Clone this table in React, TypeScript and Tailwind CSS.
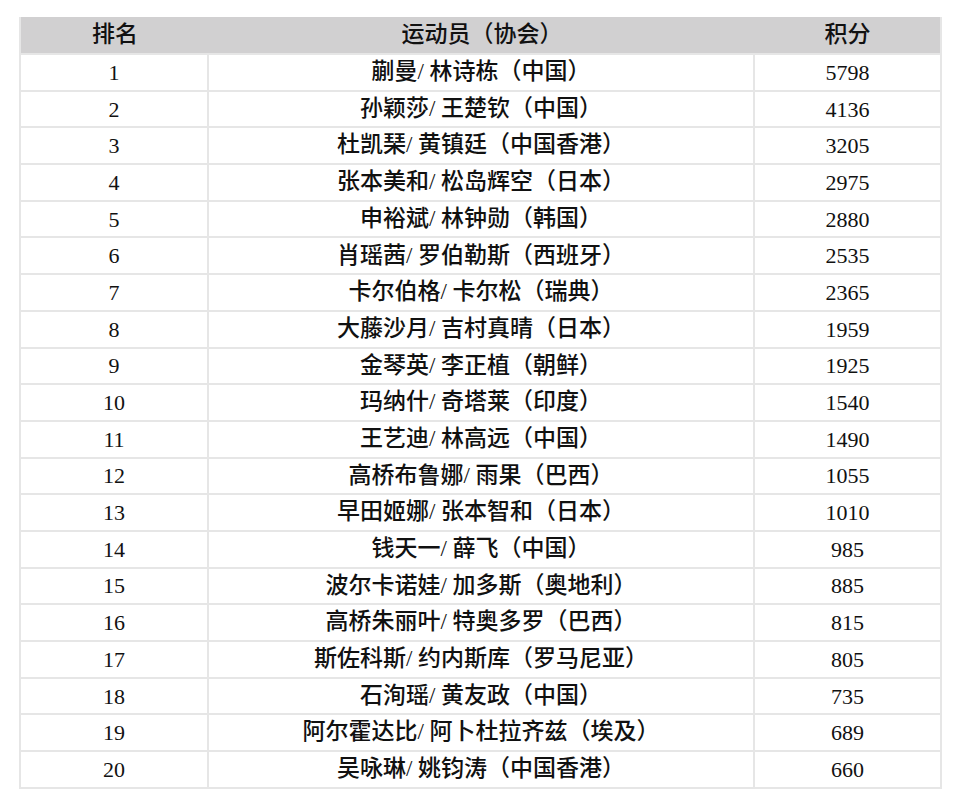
const rows: [number, string, number][] = [
  [1, '蒯曼/ 林诗栋（中国）', 5798],
  [2, '孙颖莎/ 王楚钦（中国）', 4136],
  [3, '杜凯琹/ 黄镇廷（中国香港）', 3205],
  [4, '张本美和/ 松岛辉空（日本）', 2975],
  [5, '申裕斌/ 林钟勋（韩国）', 2880],
  [6, '肖瑶茜/ 罗伯勒斯（西班牙）', 2535],
  [7, '卡尔伯格/ 卡尔松（瑞典）', 2365],
  [8, '大藤沙月/ 吉村真晴（日本）', 1959],
  [9, '金琴英/ 李正植（朝鲜）', 1925],
  [10, '玛纳什/ 奇塔莱（印度）', 1540],
  [11, '王艺迪/ 林高远（中国）', 1490],
  [12, '高桥布鲁娜/ 雨果（巴西）', 1055],
  [13, '早田姬娜/ 张本智和（日本）', 1010],
  [14, '钱天一/ 薛飞（中国）', 985],
  [15, '波尔卡诺娃/ 加多斯（奥地利）', 885],
  [16, '高桥朱丽叶/ 特奥多罗（巴西）', 815],
  [17, '斯佐科斯/ 约内斯库（罗马尼亚）', 805],
  [18, '石洵瑶/ 黄友政（中国）', 735],
  [19, '阿尔霍达比/ 阿卜杜拉齐兹（埃及）', 689],
  [20, '吴咏琳/ 姚钧涛（中国香港）', 660],
];

export default function App() {
  return (
    <div
      className="w-[960px] h-[806px] bg-white pt-[17px] pl-[19px] text-[#111]"
      style={{ fontFamily: '"Liberation Serif", "Noto Sans CJK SC", serif' }}
    >
      <div className="w-[923px] border-2 border-[#e6e6e6] border-t-0">
        <div className="grid grid-cols-[188px_546px_1fr] h-[36px] bg-[#d1d0d1] text-[23px] font-medium items-center text-center">
          <div>排名</div>
          <div>运动员（协会）</div>
          <div>积分</div>
        </div>
        {rows.map(([rank, name, pts]) => (
          <div
            key={rank}
            className="grid grid-cols-[188px_546px_1fr] h-[36.7px] border-t-2 border-[#e6e6e6] text-[22px] items-center text-center"
          >
            <div className="h-full flex items-center justify-center border-r-2 border-[#e6e6e6]">{rank}</div>
            <div className="h-full flex items-center justify-center border-r-2 border-[#e6e6e6] font-medium text-[23px]">{name}</div>
            <div className="h-full flex items-center justify-center">{pts}</div>
          </div>
        ))}
      </div>
    </div>
  );
}
